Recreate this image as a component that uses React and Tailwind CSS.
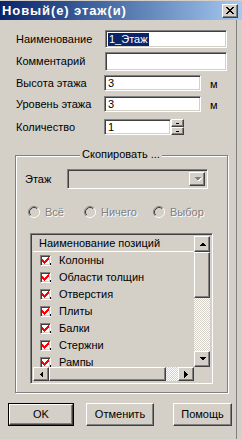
import React from "react";

const raised =
  "border border-t-white border-l-white border-r-[#404040] border-b-[#404040] shadow-[inset_-1px_-1px_0_#808080] bg-[#d4d0c8]";
const sunken =
  "border border-t-[#808080] border-l-[#808080] border-r-white border-b-white shadow-[inset_1px_1px_0_#404040,inset_-1px_-1px_0_#d4d0c8]";

function CloseX() {
  const rows = [
    [0, 2, 6, 2],
    [1, 2, 5, 2],
    [2, 4],
    [3, 2],
    [2, 4],
    [1, 2, 5, 2],
    [0, 2, 6, 2],
  ];
  const rects = [];
  rows.forEach((r, y) => {
    for (let i = 0; i < r.length; i += 2) {
      rects.push(<rect key={y + "-" + i} x={r[i]} y={y} width={r[i + 1]} height={1} fill="#000" />);
    }
  });
  return (
    <svg width="8" height="7" viewBox="0 0 8 7" shapeRendering="crispEdges">
      {rects}
    </svg>
  );
}

function Check() {
  const rows = [
    [6, 1],
    [5, 2],
    [0, 1, 4, 3],
    [0, 2, 3, 3],
    [0, 5],
    [1, 3],
    [2, 1],
  ];
  const rects = [];
  rows.forEach((r, y) => {
    for (let i = 0; i < r.length; i += 2) {
      rects.push(<rect key={y + "-" + i} x={r[i]} y={y} width={r[i + 1]} height={1} fill="#ff0000" />);
    }
  });
  return (
    <svg width="7" height="7" viewBox="0 0 7 7" shapeRendering="crispEdges">
      {rects}
    </svg>
  );
}

function Arrow({ dir, color = "#000" }) {
  let pts;
  if (dir === "up") pts = "0,4 7,4 3.5,0.5";
  if (dir === "down") pts = "0,0 7,0 3.5,3.5";
  if (dir === "left") pts = "4,0 4,7 0.5,3.5";
  if (dir === "right") pts = "0,0 0,7 3.5,3.5";
  const vertical = dir === "up" || dir === "down";
  return (
    <svg width={vertical ? 7 : 4} height={vertical ? 4 : 7} viewBox={vertical ? "0 0 7 4" : "0 0 4 7"} shapeRendering="crispEdges">
      <polygon points={pts} fill={color} />
    </svg>
  );
}

function Radio() {
  return (
    <svg width="12" height="12" viewBox="0 0 12 12" className="shrink-0">
      <circle cx="6" cy="6" r="4.5" fill="#d4d0c8" />
      <path d="M2.11 9.89 A5.5 5.5 0 0 1 9.89 2.11" stroke="#808080" strokeWidth="1" fill="none" />
      <path d="M9.89 2.11 A5.5 5.5 0 0 1 2.11 9.89" stroke="#ffffff" strokeWidth="1" fill="none" />
      <path d="M2.82 9.18 A4.5 4.5 0 0 1 9.18 2.82" stroke="#404040" strokeWidth="1" fill="none" />
      <path d="M9.18 2.82 A4.5 4.5 0 0 1 2.82 9.18" stroke="#d4d0c8" strokeWidth="1" fill="none" />
    </svg>
  );
}

const items = ["Колонны", "Области толщин", "Отверстия", "Плиты", "Балки", "Стержни", "Рампы"];

export default function App() {
  return (
    <div className="relative w-[242px] h-[439px] bg-[#d4d0c8] overflow-hidden flex flex-col font-['Liberation_Sans',Arial,sans-serif] text-[11px] text-black leading-none">
      {/* Title bar */}
      <div className="mt-[1px] h-[19px] shrink-0 flex items-center bg-linear-to-r from-[#0a246a] to-[#a6caf0]">
        <span className="pl-[2px] text-white font-bold text-[13px] tracking-[0.9px]">Новый(е) этаж(и)</span>
        <div className={"ml-auto mr-[4px] w-[16px] h-[14px] flex items-center justify-center " + raised}>
          <CloseX />
        </div>
      </div>

      <div className="w-[237px] flex-1 flex flex-col border-r border-[#808080]">
        {/* Form rows */}
        <div className="pl-[16px] flex flex-col">
          <div className="mt-[10px] h-[18px] flex items-center">
            <span className="w-[89px]">Наименование</span>
            <div className={"w-[122px] h-full bg-white flex items-center pl-[2px] " + sunken}>
              <span className="bg-[#0a246a] text-white px-[1px] h-[13px] flex items-center">1_Этаж</span>
            </div>
          </div>
          <div className="mt-[4px] h-[19px] flex items-center">
            <span className="w-[89px]">Комментарий</span>
            <div className={"w-[122px] h-full bg-white " + sunken}></div>
          </div>
          <div className="mt-[4px] h-[16px] flex items-center">
            <span className="w-[88px]">Высота этажа</span>
            <div className={"w-[97px] h-full bg-white flex items-center pl-[3px] " + sunken}>3</div>
            <span className="ml-[9px] mt-[3px]">м</span>
          </div>
          <div className="mt-[5px] h-[16px] flex items-center">
            <span className="w-[88px]">Уровень этажа</span>
            <div className={"w-[97px] h-full bg-white flex items-center pl-[3px] " + sunken}>3</div>
            <span className="ml-[9px] mt-[3px]">м</span>
          </div>
          <div className="mt-[7px] h-[16px] flex items-center">
            <span className="w-[88px]">Количество</span>
            <div className={"w-[67px] h-full bg-white flex items-center pl-[3px] " + sunken}>1</div>
            <div className="w-[13px] h-full flex flex-col">
              <div className={"h-[8px] flex items-center justify-center " + raised}>
                <span className="w-[3px] h-[1px] bg-black"></span>
              </div>
              <div className={"h-[8px] flex items-center justify-center " + raised}>
                <span className="w-[3px] h-[1px] bg-black"></span>
              </div>
            </div>
          </div>
        </div>

        {/* Group box */}
        <div className="relative mt-[20px] ml-[15px] w-[213px] h-[238px] border border-[#808080] shadow-[inset_1px_1px_0_#fff,1px_1px_0_#fff] flex flex-col">
          <span className="absolute left-[64px] top-[-7px] bg-[#d4d0c8] px-[2px]">Скопировать ...</span>

          <div className="mt-[13px] pl-[9px] h-[20px] flex items-center">
            <span className="w-[42px]">Этаж</span>
            <div className={"w-[141px] h-full bg-[#d4d0c8] flex justify-end p-[2px] " + sunken}>
              <div className={"w-[16px] h-full flex items-center justify-center " + raised}>
                <div className="relative">
                  <div className="absolute left-[1px] top-[1px]">
                    <Arrow dir="down" color="#fff" />
                  </div>
                  <div className="relative">
                    <Arrow dir="down" color="#808080" />
                  </div>
                </div>
              </div>
            </div>
          </div>

          <div className="mt-[16px] h-[14px] flex items-center text-[#808080] [text-shadow:1px_1px_0_#fff]">
            <div className="ml-[12px] w-[56px] flex items-center">
              <Radio />
              <span className="ml-[5px]">Всё</span>
            </div>
            <div className="w-[69px] flex items-center">
              <Radio />
              <span className="ml-[5px]">Ничего</span>
            </div>
            <div className="flex items-center">
              <Radio />
              <span className="ml-[5px]">Выбор</span>
            </div>
          </div>

          {/* List */}
          <div className={"mt-[14px] ml-[14px] w-[183px] h-[151px] p-[2px] flex flex-col " + sunken}>
            <div className="h-[131px] flex">
              <div className="w-[163px] flex flex-col overflow-hidden">
                <div className="h-[16px] shrink-0 flex items-center pl-[6px] border-b border-white">Наименование позиций</div>
                {items.map((t) => (
                  <div key={t} className="h-[17px] shrink-0 flex items-center pl-[7px]">
                    <div className="relative">
                      <div className={"w-[11px] h-[11px] bg-white flex items-center justify-center " + sunken}>
                        <Check />
                      </div>
                      <span className="absolute left-[10px] top-[8px] w-[1px] h-[2px] bg-black"></span>
                    </div>
                    <span className="ml-[8px]">{t}</span>
                  </div>
                ))}
              </div>
              <div className="w-[16px] flex flex-col">
                <div className={"h-[16px] flex items-center justify-center " + raised}>
                  <Arrow dir="up" />
                </div>
                <div className={"h-[46px] " + raised}></div>
                <div className="flex-1 bg-[repeating-conic-gradient(#ffffff_0_25%,#d4d0c8_0_50%)] bg-size-[2px_2px]"></div>
                <div className={"h-[16px] flex items-center justify-center " + raised}>
                  <Arrow dir="down" />
                </div>
              </div>
            </div>
            <div className="h-[16px] flex">
              <div className={"w-[16px] flex items-center justify-center " + raised}>
                <Arrow dir="left" />
              </div>
              <div className={"w-[118px] " + raised}></div>
              <div className="w-[13px] bg-[repeating-conic-gradient(#ffffff_0_25%,#d4d0c8_0_50%)] bg-size-[2px_2px]"></div>
              <div className={"w-[16px] flex items-center justify-center " + raised}>
                <Arrow dir="right" />
              </div>
              <div className="w-[16px] bg-[#d4d0c8]"></div>
            </div>
          </div>
        </div>

        {/* Buttons */}
        <div className="mt-[10px] flex items-start">
          <div className="ml-[8px] w-[66px] h-[23px] border border-black">
            <div className={"w-full h-full flex items-center justify-center " + raised}>OK</div>
          </div>
          <div className={"ml-[12px] w-[68px] h-[23px] flex items-center justify-center " + raised}>Отменить</div>
          <div className={"ml-[19px] w-[59px] h-[23px] flex items-center justify-center " + raised}>Помощь</div>
        </div>
      </div>
    </div>
  );
}
